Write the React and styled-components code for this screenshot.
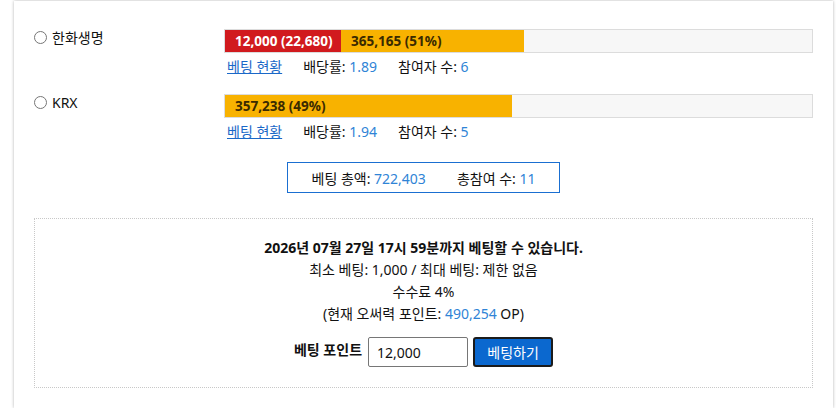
import React from 'react';
import styled, { createGlobalStyle } from 'styled-components';

const GlobalStyle = createGlobalStyle`
  body {
    margin: 0;
    background: #fff;
    font-family: "Noto Sans", "Noto Sans CJK KR", sans-serif;
    font-size: 14px;
    color: #111;
  }
`;

const Card = styled.div`
  margin: 1px 0 0 14px;
  width: 819px;
  box-sizing: border-box;
  background: #fff;
  box-shadow: 0 0 3px rgba(0, 0, 0, 0.3);
  padding: 28px 20px 20px;
`;

const OptionRow = styled.div`
  display: grid;
  grid-template-columns: 190px 1fr;
  margin-bottom: 17px;
`;

const OptionLabel = styled.label`
  display: flex;
  align-items: center;
  gap: 5px;
  height: 16px;
`;

const Radio = styled.input`
  margin: 0;
  width: 13px;
  height: 13px;
`;

const Bar = styled.div`
  display: flex;
  height: 24px;
  box-sizing: border-box;
  border: 1px solid #dcdcdc;
  background: #f7f7f7;
`;

const Segment = styled.div`
  display: flex;
  align-items: center;
  padding-left: 10px;
  box-sizing: border-box;
  background: ${(p) => p.$bg};
  color: ${(p) => p.$fg};
  font-weight: bold;
  font-size: 13.5px;
  white-space: nowrap;
`;

const Info = styled.div`
  display: flex;
  align-items: center;
  gap: 21px;
  height: 24px;
  box-sizing: border-box;
  padding-top: 2px;
`;

const Link = styled.a`
  color: #1a68c8;
  text-decoration: underline;
  margin-left: 3px;
  cursor: pointer;
`;

const Num = styled.span`
  color: #2f84d6;
`;

const Summary = styled.div`
  width: 273px;
  height: 31px;
  box-sizing: border-box;
  margin: 20px auto 25px;
  border: 1px solid #1a6fd1;
  display: flex;
  justify-content: center;
  align-items: center;
  gap: 31px;
`;

const BetBox = styled.div`
  border: 1px dotted #c8c8c8;
  padding: 18px 0 20px;
  display: flex;
  flex-direction: column;
  align-items: center;
  line-height: 22px;
`;

const Deadline = styled.div`
  font-weight: bold;
`;

const BetForm = styled.div`
  display: flex;
  align-items: center;
  gap: 5px;
  margin-top: 12px;
`;

const FormLabel = styled.span`
  font-weight: bold;
  margin-right: 1px;
  margin-top: -4px;
`;

const PointInput = styled.input`
  width: 100px;
  height: 30px;
  box-sizing: border-box;
  border: 1px solid #767676;
  border-radius: 2px;
  padding: 0 8px;
  font-family: inherit;
  font-size: 14px;
  color: #111;
`;

const BetButton = styled.button`
  width: 80px;
  height: 30px;
  box-sizing: border-box;
  border: 2px solid #1b1b1b;
  border-radius: 3px;
  background: #0b68cf;
  color: #fff;
  font-family: inherit;
  font-size: 14px;
  cursor: pointer;
`;

const options = [
  {
    name: '한화생명',
    segments: [
      { label: '12,000 (22,680)', width: 116, bg: '#d11a1e', fg: '#fff' },
      { label: '365,165 (51%)', width: 183, bg: '#f8b200', fg: '#3a2a00' },
    ],
    rate: '1.89',
    count: 6,
  },
  {
    name: 'KRX',
    segments: [{ label: '357,238 (49%)', width: 287, bg: '#f8b200', fg: '#3a2a00' }],
    rate: '1.94',
    count: 5,
  },
];

export default function App() {
  return (
    <>
      <GlobalStyle />
      <Card>
        {options.map((o) => (
          <OptionRow key={o.name}>
            <OptionLabel>
              <Radio type="radio" name="pick" />
              {o.name}
            </OptionLabel>
            <div>
              <Bar>
                {o.segments.map((s) => (
                  <Segment key={s.label} $bg={s.bg} $fg={s.fg} style={{ width: s.width }}>
                    {s.label}
                  </Segment>
                ))}
              </Bar>
              <Info>
                <Link>베팅 현황</Link>
                <span>
                  배당률: <Num>{o.rate}</Num>
                </span>
                <span>
                  참여자 수: <Num>{o.count}</Num>
                </span>
              </Info>
            </div>
          </OptionRow>
        ))}
        <Summary>
          <span>
            베팅 총액: <Num>722,403</Num>
          </span>
          <span>
            총참여 수: <Num>11</Num>
          </span>
        </Summary>
        <BetBox>
          <Deadline>2026년 07월 27일 17시 59분까지 베팅할 수 있습니다.</Deadline>
          <div>최소 베팅: 1,000 / 최대 베팅: 제한 없음</div>
          <div>수수료 4%</div>
          <div>
            (현재 오써력 포인트: <Num>490,254</Num> OP)
          </div>
          <BetForm>
            <FormLabel>베팅 포인트</FormLabel>
            <PointInput defaultValue="12,000" />
            <BetButton>베팅하기</BetButton>
          </BetForm>
        </BetBox>
      </Card>
    </>
  );
}
